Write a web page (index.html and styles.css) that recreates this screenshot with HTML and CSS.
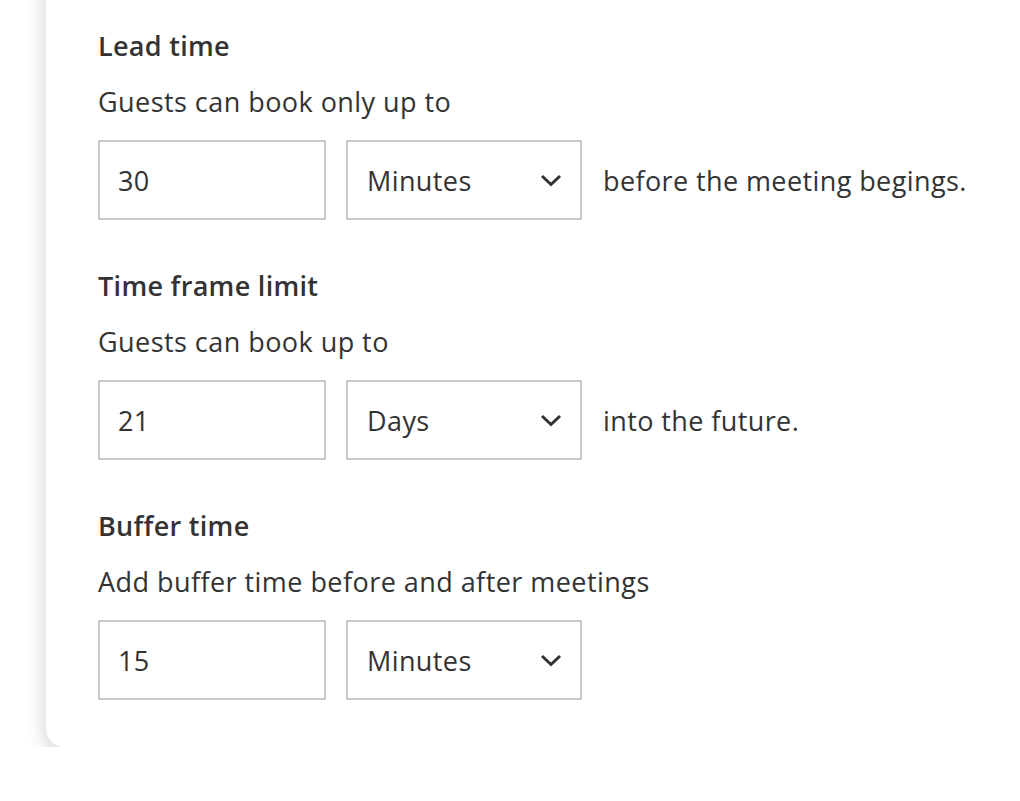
FILE: index.html
```html
<!DOCTYPE html>
<html lang="en">
<head>
    <meta charset="UTF-8">
    <meta name="viewport" content="width=device-width, initial-scale=1.0">
    <link rel="stylesheet" href="styles.css">
    <title>Booking limits</title>
</head>
<body>
    <div class="card">
        <!-- lead time -->
        <div class="setting">
            <h3>Lead time</h3>
            <p>Guests can book only up to</p>
            <div class="row">
                <input type="text" class="num-input" value="30">
                <div class="select-wrap">
                    <select class="unit-select">
                        <option>Minutes</option>
                        <option>Hours</option>
                        <option>Days</option>
                    </select>
                    <svg class="chevron" width="22" height="13" viewBox="0 0 22 13"><path d="M2 2 L11 10.5 L20 2" fill="none" stroke="#333" stroke-width="3"/></svg>
                </div>
                <span class="after">before the meeting begings.</span>
            </div>
        </div>

        <!-- time frame -->
        <div class="setting">
            <h3>Time frame limit</h3>
            <p>Guests can book up to</p>
            <div class="row">
                <input type="text" class="num-input" value="21">
                <div class="select-wrap">
                    <select class="unit-select">
                        <option>Days</option>
                        <option>Weeks</option>
                        <option>Months</option>
                    </select>
                    <svg class="chevron" width="22" height="13" viewBox="0 0 22 13"><path d="M2 2 L11 10.5 L20 2" fill="none" stroke="#333" stroke-width="3"/></svg>
                </div>
                <span class="after">into the future.</span>
            </div>
        </div>

        <!-- buffer -->
        <div class="setting">
            <h3>Buffer time</h3>
            <p>Add buffer time before and after meetings</p>
            <div class="row">
                <input type="text" class="num-input" value="15">
                <div class="select-wrap">
                    <select class="unit-select">
                        <option>Minutes</option>
                        <option>Hours</option>
                    </select>
                    <svg class="chevron" width="22" height="13" viewBox="0 0 22 13"><path d="M2 2 L11 10.5 L20 2" fill="none" stroke="#333" stroke-width="3"/></svg>
                </div>
            </div>
        </div>
    </div>
</body>
</html>
```

FILE: styles.css
```css
* {
  margin: 0;
  padding: 0;
  box-sizing: border-box;
  font-family: 'Open Sans', sans-serif;
}

body {
  background-color: #fff;
  color: #333;
  overflow: hidden;
}

.card {
  margin: -40px -40px 0 46px;
  padding: 69px 0 47px 52px;
  background-color: #fff;
  border-radius: 18px;
  box-shadow: 0 6px 20px rgba(0, 0, 0, 0.2);
}

.setting {
  margin-bottom: 49px;
}

.setting:last-child {
  margin-bottom: 0;
}

h3 {
  font-size: 27px;
  font-weight: 600;
  letter-spacing: 0.3px;
  line-height: 34px;
}

p {
  font-size: 27px;
  letter-spacing: 0.45px;
  line-height: 34px;
  margin-top: 22px;
}

.row {
  display: flex;
  align-items: center;
  gap: 20px;
  margin-top: 21px;
}

.num-input {
  width: 228px;
  height: 80px;
  border: 2px solid #c9c9c9;
  padding: 0 18px;
  font-size: 27px;
  letter-spacing: 0.4px;
  color: #333;
  background: #fff;
  outline: none;
}

.select-wrap {
  position: relative;
}

.unit-select {
  appearance: none;
  -webkit-appearance: none;
  width: 236px;
  height: 80px;
  border: 2px solid #c9c9c9;
  border-radius: 0;
  padding: 0 19px;
  font-size: 27px;
  letter-spacing: 0.4px;
  color: #333;
  background: #fff;
  outline: none;
}

.chevron {
  position: absolute;
  right: 20px;
  top: 34px;
  pointer-events: none;
}

.after {
  font-size: 27px;
  letter-spacing: 0.4px;
  margin-left: 1px;
}
```
